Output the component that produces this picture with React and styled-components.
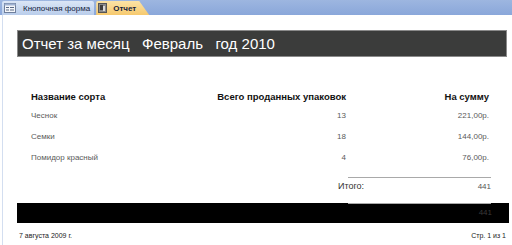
import React from 'react'
import styled, { createGlobalStyle } from 'styled-components'

const GlobalStyle = createGlobalStyle`
    body {
        margin: 0;
        background: #ffffff;
        font-family: "Liberation Sans", Arial, sans-serif;
        overflow: hidden;
    }
`;

const TabBar = styled.div`
    display: flex;
    align-items: flex-end;
    height: 15px;
    padding-left: 2px;
    background: linear-gradient(#9db6e0, #8aa7da);
`;

const Tab = styled.div`
    display: flex;
    align-items: center;
    gap: ${p => p.$active ? '6px' : '7px'};
    height: 14px;
    padding: 0 ${p => p.$active ? '13px' : '4px'} 0 2px;
    margin-right: 2px;
    font-size: 8px;
    font-weight: ${p => p.$active ? 700 : 400};
    color: #15233d;
    background: ${p => p.$active
        ? 'linear-gradient(#fbe3a6, #f6c96e)'
        : 'linear-gradient(#dbe6f6, #b9cdeb)'};
    border-radius: 2px 2px 0 0;
    clip-path: ${p => p.$active
        ? 'polygon(0 0, calc(100% - 10px) 0, 100% 100%, 0 100%)'
        : 'none'};
`;

const Page = styled.div`
    box-sizing: border-box;
    height: 230px;
    margin-left: 2px;
    border-left: 1px solid #d3def0;
    padding-top: 15px;
`;

const TitleBar = styled.div`
    height: 25px;
    margin: 0 5px 0 14px;
    padding-left: 4px;
    display: flex;
    align-items: center;
    background: #3b3c3b;
    border: 1px solid #8a8a8a;
    color: #ffffff;
    font-size: 15px;
    white-space: pre;
`;

const Grid = styled.div`
    display: grid;
    grid-template-columns: 181px 134px 143px;
    grid-template-rows: 17px;
    grid-auto-rows: 21px;
    margin: 31px 0 0 28px;
`;

const Cell = styled.div`
    display: flex;
    align-items: center;
    justify-content: ${p => p.$right ? 'flex-end' : 'flex-start'};
    font-size: ${p => p.$head ? '9.5px' : '8px'};
    font-weight: ${p => p.$head ? 700 : 400};
    color: ${p => p.$head ? '#111111' : '#5a5a5a'};
`;

const Totals = styled.div`
    width: 153px;
    margin: 9px 0 0 335px;
`;

const Rule = styled.div`
    margin-left: ${p => p.$indent}px;
    width: 143px;
    border-top: 1px solid #a9a9a9;
`;

const TotalRow = styled.div`
    display: flex;
    justify-content: space-between;
    align-items: center;
    height: 16px;
    font-size: 9px;
    color: #333333;

    span:last-child {
        font-size: 8px;
        color: #555555;
    }
`;

const FooterBar = styled.div`
    height: 20px;
    margin: 9px 3px 0 14px;
    background: #000000;
    display: flex;
    flex-direction: column;
`;

const BarValue = styled.div`
    align-self: flex-end;
    margin: 4px 17px 0 0;
    font-size: 8px;
    color: #3a3a3a;
`;

const Footer = styled.div`
    display: flex;
    justify-content: space-between;
    margin: 9px 6px 0 16px;
    font-size: 7px;
    color: #222222;
`;

const FormIcon = () => (
    <svg width="12" height="10" viewBox="0 0 12 10">
        <rect x="0.5" y="0.5" width="11" height="9" fill="#f4f6fa" stroke="#6f7f9c" />
        <rect x="0.5" y="0.5" width="11" height="2" fill="#9fb2d2" />
        <rect x="2" y="4" width="3" height="1" fill="#5a6a86" />
        <rect x="6" y="4" width="4" height="1" fill="#5a6a86" />
        <rect x="2" y="6.5" width="3" height="1" fill="#5a6a86" />
        <rect x="6" y="6.5" width="4" height="1" fill="#5a6a86" />
    </svg>
)

const ReportIcon = () => (
    <svg width="9" height="10" viewBox="0 0 9 10">
        <rect x="0.5" y="0.5" width="8" height="9" fill="#8a8a8a" stroke="#555" />
        <rect x="2" y="2" width="3" height="5" fill="#3d3d3d" />
        <rect x="5" y="3" width="2" height="5" fill="#d9d9d9" />
    </svg>
)

const rows = [
    { name: 'Чеснок', count: 13, sum: '221,00р.' },
    { name: 'Семки', count: 18, sum: '144,00р.' },
    { name: 'Помидор красный', count: 4, sum: '76,00р.' },
]

const App = () => {
    return (
        <>
            <GlobalStyle />
            <TabBar>
                <Tab><FormIcon />Кнопочная форма</Tab>
                <Tab $active><ReportIcon />Отчет</Tab>
            </TabBar>
            <Page>
                <TitleBar>{'Отчет за месяц   Февраль   год 2010'}</TitleBar>
                <Grid>
                    <Cell $head>Название сорта</Cell>
                    <Cell $head $right>Всего проданных упаковок</Cell>
                    <Cell $head $right>На сумму</Cell>
                    {rows.map(r => (
                        <React.Fragment key={r.name}>
                            <Cell>{r.name}</Cell>
                            <Cell $right>{r.count}</Cell>
                            <Cell $right>{r.sum}</Cell>
                        </React.Fragment>
                    ))}
                </Grid>
                <Totals>
                    <Rule $indent={10} />
                    <TotalRow><span>Итого:</span><span>441</span></TotalRow>
                </Totals>
                <FooterBar>
                    <Rule $indent={331} />
                    <BarValue>441</BarValue>
                </FooterBar>
                <Footer>
                    <span>7 августа 2009 г.</span>
                    <span>Стр. 1 из 1</span>
                </Footer>
            </Page>
        </>
    )
}

export default App
